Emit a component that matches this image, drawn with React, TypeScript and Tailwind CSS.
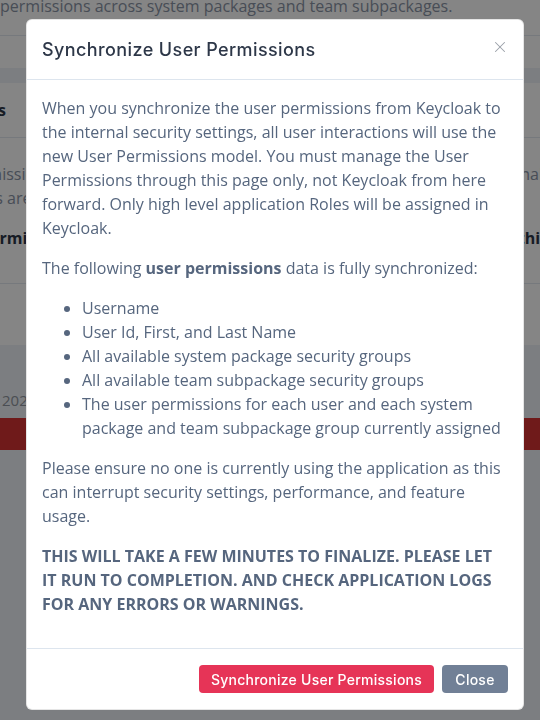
import { X } from 'lucide-react'

const itensSincronizados = [
  'Username',
  'User Id, First, and Last Name',
  'All available system package security groups',
  'All available team subpackage security groups',
  'The user permissions for each user and each system package and team subpackage group currently assigned',
]

function PaginaFundo() {
  return (
    <div className="font-['Open_Sans',sans-serif] text-[16px] leading-6 text-[#8a94a6]">
      {/* cartão de cima, cortado pelo topo da janela */}
      <div className="bg-white">
        <div className="-mt-[6px] pb-[17px] whitespace-nowrap">
          permissions across system packages and team subpackages.
        </div>
        <div className="h-[33px] border-t border-[#e2e8f0]"></div>
      </div>

      <div className="mt-[15px] bg-white">
        <div className="h-[55px] border-b border-[#e2e8f0] flex items-center">
          <div className="w-[6px] flex justify-end">
            <span className="shrink-0 font-bold text-[#2d3748] whitespace-nowrap">User Permissions</span>
          </div>
        </div>
        <div className="h-[146px] pt-[24px] border-b border-[#e2e8f0] overflow-hidden">
          <div className="flex justify-between whitespace-nowrap -ml-[38px] -mr-[3px]">
            <span>permissions are managed</span>
            <span>internal</span>
          </div>
          <div className="flex justify-between whitespace-nowrap -ml-[66px]">
            <span>packages are</span>
            <span></span>
          </div>
          <div className="mt-[16px] flex justify-between whitespace-nowrap font-bold text-[#2d3748] -ml-[20px] -mr-[8px]">
            <span>Permissions</span>
            <span>this</span>
          </div>
        </div>
        <div className="h-[61px]"></div>
      </div>

      <div className="pt-[45px] mb-[8px] pl-[2px] text-[15px] leading-5 text-[#9096a0] whitespace-nowrap">
        2021
      </div>
      <div className="h-[32px] bg-[#d53333]"></div>
    </div>
  )
}

function App() {
  return (
    <div className="relative h-[720px] overflow-hidden bg-[#edf2f7]">
      <PaginaFundo />

      <div className="fixed inset-0 bg-black/[0.48] pt-[19px] pl-[26px]">
        <div className="w-[498px] bg-white rounded-[6px] border border-black/10 overflow-hidden">
          <div className="flex items-center justify-between pl-[15px] pr-[14px] py-[16px] border-b border-[#dde5ee]">
            <h5 className="font-['Inter',sans-serif] font-medium text-[18px] leading-[27px] text-[#2d3748] tracking-[0.4px]">
              Synchronize User Permissions
            </h5>
            <button className="text-[#9aa0a8] p-0 -mt-[5px]">
              <X size={18} strokeWidth={1.4} />
            </button>
          </div>

          <div className="px-[15px] py-[16px] font-['Open_Sans',sans-serif] text-[16px] leading-6 text-[#56667e]">
            <p className="mb-4">
              When you synchronize the user permissions from Keycloak to the internal security settings, all user
              interactions will use the new User Permissions model. You must manage the User Permissions through this
              page only, not Keycloak from here forward. Only high level application Roles will be assigned in Keycloak.
            </p>
            <p className="mb-4">
              The following <strong className="font-bold">user permissions</strong> data is fully synchronized:
            </p>
            <ul className="mb-4 pl-10 list-disc marker:text-[#56667e]">
              {itensSincronizados.map((item) => (
                <li key={item}>{item}</li>
              ))}
            </ul>
            <p className="mb-4">
              Please ensure no one is currently using the application as this can interrupt security settings,
              performance, and feature usage.
            </p>
            <p className="mb-4 font-bold">
              THIS WILL TAKE A FEW MINUTES TO FINALIZE. PLEASE LET IT RUN TO COMPLETION. AND CHECK APPLICATION LOGS
              FOR ANY ERRORS OR WARNINGS.
            </p>
          </div>

          <div className="flex justify-end gap-2 px-[15px] py-[16px] border-t border-[#dde5ee] font-['Inter',sans-serif] font-medium text-[14px] tracking-[0.25px]">
            <button className="rounded-[4px] bg-[#e63457] text-white h-[28px] w-[235px]">
              Synchronize User Permissions
            </button>
            <button className="rounded-[4px] bg-[#718096] text-white h-[28px] w-[66px]">
              Close
            </button>
          </div>
        </div>
      </div>
    </div>
  )
}

export default App
